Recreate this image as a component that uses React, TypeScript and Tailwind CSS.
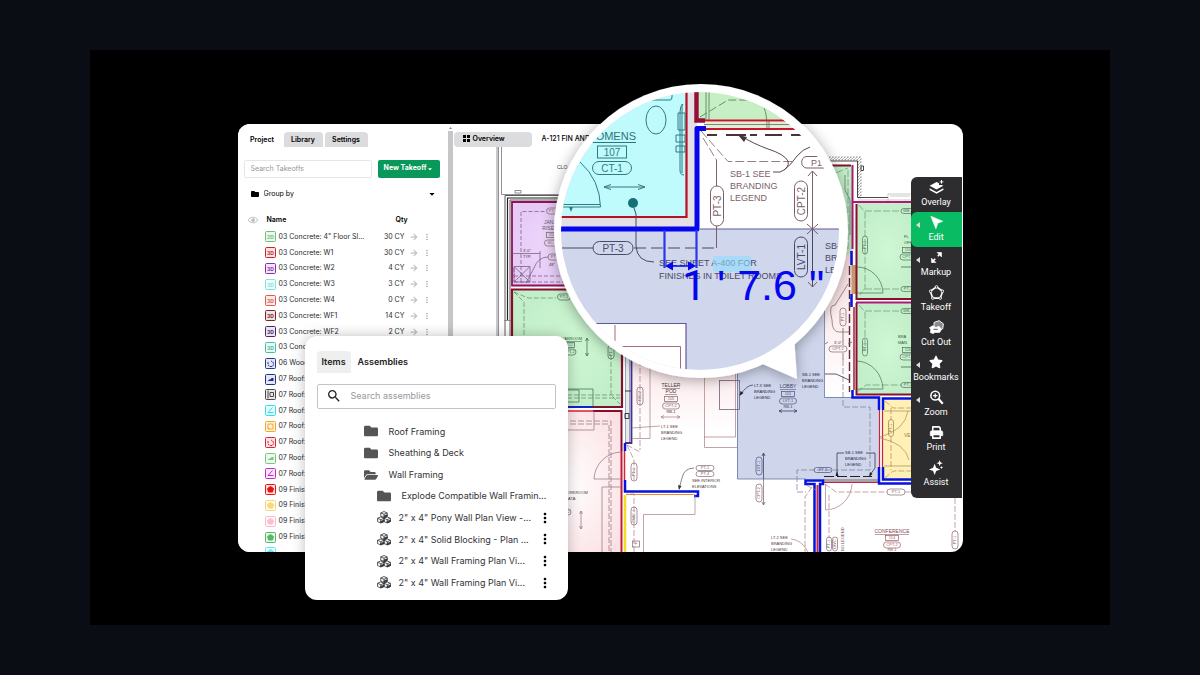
import { useState } from "react";
import type { ReactNode } from "react";
import { FaArrowRight, FaCaretDown, FaFolder, FaFolderOpen, FaRegEye, FaStar } from "react-icons/fa";
import { MdMoreVert, MdSearch } from "react-icons/md";

type Shape = "2D" | "3D" | "count" | "area" | "frame" | "angle" | "square" | "solid";

type Takeoff = { name: string; qty?: string; color: string; shape: Shape };

const takeoffs: Takeoff[] = [
  { name: '03 Concrete: 4" Floor Sl...', qty: "30 CY", color: "#6cc077", shape: "2D" },
  { name: "03 Concrete: W1", qty: "30 CY", color: "#c8232c", shape: "3D" },
  { name: "03 Concrete: W2", qty: "4 CY", color: "#8a2bb5", shape: "3D" },
  { name: "03 Concrete: W3", qty: "3 CY", color: "#7fe5dc", shape: "3D" },
  { name: "03 Concrete: W4", qty: "0 CY", color: "#df5a4a", shape: "3D" },
  { name: "03 Concrete: WF1", qty: "14 CY", color: "#7d2028", shape: "3D" },
  { name: "03 Concrete: WF2", qty: "2 CY", color: "#4b2570", shape: "3D" },
  { name: "03 Concrete", color: "#46bfa8", shape: "3D" },
  { name: "06 Wood", color: "#253a8c", shape: "count" },
  { name: "07 Roof:", color: "#1d3090", shape: "area" },
  { name: "07 Roof:", color: "#4a4a4a", shape: "frame" },
  { name: "07 Roof:", color: "#2fe0ec", shape: "angle" },
  { name: "07 Roof:", color: "#f5a623", shape: "square" },
  { name: "07 Roof:", color: "#dc2434", shape: "count" },
  { name: "07 Roof:", color: "#78c77e", shape: "area" },
  { name: "07 Roof:", color: "#bf2bc4", shape: "angle" },
  { name: "09 Finish", color: "#ee1111", shape: "solid" },
  { name: "09 Finish", color: "#f8d878", shape: "solid" },
  { name: "09 Finish", color: "#f9bfcd", shape: "solid" },
  { name: "09 Finish", color: "#55b867", shape: "solid" },
  { name: "", color: "#6fe3ef", shape: "solid" },
];

function TakeoffIcon({ shape, color }: { shape: Shape; color: string }) {
  return (
    <svg viewBox="0 0 22 22" className="size-[11px]" fill="none" stroke={color} strokeWidth="2">
      <rect x="1" y="1" width="20" height="20" rx="2" fill={color} fillOpacity="0.12" />
      {(shape === "2D" || shape === "3D") && (
        <text x="11" y="15" textAnchor="middle" fontSize="10" fontWeight="700" fill={color} stroke="none" fontFamily="Inter, sans-serif">
          {shape}
        </text>
      )}
      {shape === "count" && <path d="M6 8v6l4 3h5l2-4-1-5-4-2" strokeDasharray="4 1.5" />}
      {shape === "area" && <path d="M5 14l4-3 3-1 1-2h4v6z" fill={color} stroke="none" />}
      {shape === "frame" && <path d="M6 3v16M10 7h7v8h-7z" />}
      {shape === "angle" && <path d="M15 5L6 15h11" />}
      {shape === "square" && <path d="M6 6h10v10H6zM6 13l3 3" />}
      {shape === "solid" && <path d="M11 5l6 4-2 7H7L5 9z" fill={color} strokeLinejoin="round" />}
    </svg>
  );
}

function Sidebar() {
  const [tab, setTab] = useState("Project");

  return (
    <aside className="flex w-[210px] shrink-0 flex-col overflow-hidden bg-white">
      <nav className="flex gap-[2px] pt-2 pl-[5px]">
        {["Project", "Library", "Settings"].map((name) => (
          <button
            key={name}
            type="button"
            onClick={() => setTab(name)}
            className={`h-[15px] rounded-t-sm text-[7px] leading-[15px] font-semibold ${
              name === "Settings" ? "w-[43px]" : "w-[39px]"
            } ${tab === name ? "bg-white" : "bg-[#dcdcde]"}`}
          >
            {name}
          </button>
        ))}
      </nav>

      <div className="flex gap-[6px] px-[6px] pt-[13px]">
        <input
          aria-label="Search Takeoffs"
          placeholder="Search Takeoffs"
          className="h-[18px] w-[128px] rounded-xs border border-[#e6e6e8] px-[6px] text-[7px] outline-none placeholder:text-[#97979b]"
        />
        <button
          type="button"
          className="flex h-[18px] w-[62px] items-center justify-center gap-px rounded-xs bg-[#08985a] text-[7px] font-bold text-white"
        >
          New Takeoff <FaCaretDown className="size-[6px]" />
        </button>
      </div>

      <label className="mt-[11px] flex h-4 items-center gap-[5px] pr-[12px] pl-[13px] text-[7px]">
        <FaFolder className="size-2" />
        <select aria-label="Group by" className="flex-1 appearance-none bg-transparent outline-none">
          <option>Group by</option>
          <option>Trade</option>
        </select>
        <FaCaretDown className="size-2" />
      </label>

      <table className="mt-[12px] h-[350px] w-[203px] shrink-0 table-fixed border-collapse text-[7px] leading-[8px] text-[#2a2a2e]">
        <colgroup>
          <col className="w-[27px]" />
          <col className="w-[14px]" />
          <col />
          <col className="w-[36px]" />
          <col className="w-[18px]" />
          <col className="w-[18px]" />
        </colgroup>
        <thead>
          <tr className="h-[18px] text-black">
            <th className="pl-[10px]">
              <FaRegEye className="size-[10px] text-[#bdbdc0]" aria-label="Visible" />
            </th>
            <th colSpan={2} className="pl-[2px] text-left font-semibold">
              Name
            </th>
            <th colSpan={3} className="pl-[27px] text-left font-semibold">
              Qty
            </th>
          </tr>
        </thead>
        <tbody>
          {takeoffs.map((item, i) => (
            <tr key={i}>
              <td />
              <td>
                <TakeoffIcon shape={item.shape} color={item.color} />
              </td>
              <td className="whitespace-nowrap">{item.name}</td>
              <td className="text-right whitespace-nowrap">{item.qty}</td>
              <td className="pl-[6px]">
                <FaArrowRight className="size-2 text-[#c2c2c5]" />
              </td>
              <td>
                <button type="button" aria-label={`${item.name} menu`} className="block">
                  <MdMoreVert className="size-[10px] text-[#a0a0a4]" />
                </button>
              </td>
            </tr>
          ))}
        </tbody>
      </table>
    </aside>
  );
}

type TagProps = {
  x: number;
  y: number;
  w: number;
  h: number;
  size: number;
  children: string;
  vertical?: boolean;
  boxed?: boolean;
  color?: string;
};

// Finish tag: pill (or box) centred on x,y
function Tag({ x, y, w, h, size, children, vertical, boxed, color = "#85656d" }: TagProps) {
  return (
    <g transform={`translate(${x} ${y})${vertical ? " rotate(-90)" : ""}`}>
      <rect
        x={-w / 2}
        y={-h / 2}
        width={w}
        height={h}
        rx={boxed ? 0 : h / 2}
        fill="none"
        stroke={color}
        strokeWidth={size > 6 ? 1 : 0.7}
      />
      <text y={size * 0.36} fontSize={size} textAnchor="middle" fill={color}>
        {children}
      </text>
    </g>
  );
}

function Note({
  x,
  y,
  lines,
  size = 4,
  step = 6,
  color = "#4d363e",
  anchor = "start",
}: {
  x: number;
  y: number;
  lines: string[];
  size?: number;
  step?: number;
  color?: string;
  anchor?: "start" | "middle";
}) {
  return (
    <text fontSize={size} fill={color} textAnchor={anchor}>
      {lines.map((line, i) => (
        <tspan key={i} x={x} y={y + i * step}>
          {line}
        </tspan>
      ))}
    </text>
  );
}

function FloorPlan() {
  return (
    <svg
      viewBox="453 147 510 405"
      preserveAspectRatio="xMidYMid slice"
      className="min-h-0 w-full flex-1"
      fontFamily="'Liberation Sans', Arial, sans-serif"
      fill="none"
    >
      <defs>
        <radialGradient id="purple">
          <stop offset="0" stopColor="#f0dcfd" />
          <stop offset="1" stopColor="#e6cbf7" />
        </radialGradient>
        <radialGradient id="green">
          <stop offset="0" stopColor="#cff7d3" />
          <stop offset="1" stopColor="#c2efc9" />
        </radialGradient>
        <radialGradient id="pink" r="0.7">
          <stop offset="0" stopColor="#ffffff" />
          <stop offset="1" stopColor="#fbdde1" />
        </radialGradient>
        <linearGradient id="pinkDown" x2="0" y2="1">
          <stop offset="0" stopColor="#fbdfe2" />
          <stop offset="1" stopColor="#ffffff" />
        </linearGradient>
        <pattern id="hatch" width="3" height="3" patternUnits="userSpaceOnUse">
          <path d="M0 3L3 0" stroke="#888" strokeWidth="0.6" />
        </pattern>
      </defs>

      {/* room fills */}
      <rect x="512" y="202" width="110" height="84" fill="url(#purple)" />
      <rect x="512" y="290" width="110" height="117" fill="url(#green)" />
      <rect x="512" y="411" width="110" height="145" fill="url(#pink)" />
      <rect x="632" y="340" width="105" height="90" fill="url(#pinkDown)" />
      <path d="M737 330L824 270V397H880V479H737z" fill="#cfd6ec" />
      <rect x="825" y="250" width="28" height="147" fill="url(#pinkDown)" />
      <rect x="820" y="166" width="32" height="88" fill="url(#green)" />
      <rect x="857" y="203" width="60" height="96" fill="url(#green)" />
      <rect x="857" y="303" width="60" height="91" fill="url(#green)" />
      <rect x="883" y="400" width="40" height="80" fill="#fff0b5" />

      {/* outer shell */}
      <g stroke="#77747a" strokeWidth="0.8">
        <path d="M497 147V560M498.5 147V560M501.5 147V194.5H570M515 193V190.500H521V193z" />
        <path d="M505 560V195.500H570M510 560V200H570" stroke="#333" />
        <path d="M507.500 320V198H570" stroke="#222" strokeWidth="1.200" />
        <path d="M504 320.500H511" />
      </g>
      <path d="M820 157h41v41h-3v-38h-38z" fill="url(#hatch)" stroke="#666" strokeWidth="0.5" strokeDasharray="2 1" />
      <path d="M820 161H857.500V197.500H888M861 166h2.500v4.500H861z" stroke="#333" strokeWidth="0.9" />
      <path d="M858 200H911M888 194V201M888 194H911M890 196h20M946 190v8" stroke="#aaa" strokeWidth="0.6" />

      {/* purple room */}
      <path d="M600 202H512V285.500H600" stroke="#90105a" strokeWidth="1.800" />
      <g stroke="#6d5877" strokeWidth="0.7">
        <path d="M521 282V211.500H545M514 276H600M514 282H600M514 268V282" strokeDasharray="4 2" />
        <path d="M514 266.500H530V282H514zL530 282M530 266.500L514 282M511 253.500H540M540 251V268M548 257Q538 257 534 268L526 283" />
      </g>
      <Tag x={553} y={211} w={13} h={6} size={4}>PT-1</Tag>
      <Note x={550} y={224} lines={["JAN./", "RISER"]} size={5} color="#6d5877" anchor="middle" />
      <Tag x={552} y={235} w={11} h={5} size={4} boxed>110</Tag>
      <Tag x={552} y={243} w={15} h={6} size={4}>SC-1</Tag>
      <Tag x={555} y={257} w={14} h={6} size={4}>PT-2</Tag>
      <Note x={523} y={252} lines={["3'-0\"", "TYP."]} />
      <Note x={549} y={266} lines={['48"']} />

      {/* cloakroom */}
      <path d="M622 350V407H593M512 430V289.500H600" stroke="#850f2a" strokeWidth="2.200" />
      <path d="M568 407H593" stroke="#1521c8" strokeWidth="2" />
      <g stroke="#5e8a66" strokeWidth="0.7">
        <path d="M514 292L524 302V400M514 292L528 298H556M611 355V395L620 404M560 395H620M560 398H620" strokeDasharray="5 2" />
        <path d="M587 338V356M585.500 341L587 338L588.500 341M585.500 353L587 356L588.500 353M568 389H593V406M568 390H579V402H568" stroke="#3f6647" />
      </g>
      <Tag x={564} y={297} w={13} h={6} size={4} color="#4d6d56">PT-1</Tag>
      <Tag x={611} y={352} w={14} h={6} size={4} vertical color="#4d6d56">PT-1</Tag>
      <Note x={569} y={340} lines={["CLOAKROOM"]} anchor="middle" size={4} color="#345a3c" />
      <path d="M557 341.500H582" stroke="#345a3c" strokeWidth="0.5" />
      <Tag x={570} y={345} w={9} h={5} size={4} boxed color="#4d6d56">112</Tag>
      <Tag x={569} y={352} w={14} h={6} size={4} color="#4d6d56">CPT-2</Tag>
      <Note x={557} y={169} lines={["CLO"]} size={5} color="#444" />

      {/* workroom */}
      <path d="M568 411H593" stroke="#d82031" strokeWidth="1.500" />
      <path d="M593 411H621.500V451" stroke="#850f2a" strokeWidth="2" />
      <path d="M621.500 451V560" stroke="#c41c3a" strokeWidth="2" />
      <g stroke="#947078" strokeWidth="0.7">
        <path d="M570 421H611V552M570 424H609V552" strokeDasharray="6 2" />
        <path d="M594 411V430H568M594 479A28 28 0 0 1 621 452M594 479H621M602 552V487H621" />
        <path d="M581 511V529M579.500 514L581 511L582.500 514M579.500 526L581 529L582.500 526" />
      </g>
      <Note x={563} y={494} lines={["WORKROOM", "/ DATA"]} />
      <Tag x={564} y={512} w={14} h={6} size={4}>CPT-2</Tag>

      {/* divider wall */}
      <rect x="625" y="350" width="7" height="93" fill="#e6ebf3" />
      <path d="M625.500 350V443M629.500 350V443" stroke="#7c8496" strokeWidth="0.7" />
      <path d="M625 391H631M625 413.500H629V418.500H625z" stroke="#222" strokeWidth="0.9" />
      <path d="M631.500 350V443H625" stroke="#473090" strokeWidth="1.800" />
      <path d="M624.500 451V480" stroke="#d2253a" strokeWidth="1.500" />
      <path d="M625 443V451M625 480V491.500H698V496H694" stroke="#0512e0" strokeWidth="2.500" />
      <path d="M626 494.500H694" stroke="#ef8b2c" strokeWidth="1.200" />
      <path d="M625 495V560" stroke="#f1dc28" strokeWidth="2.500" />

      {/* teller pod */}
      <g stroke="#a87c83" strokeWidth="0.7">
        <path d="M650 360V438.500H632M704.500 365V447.500H737M735.500 365V437H704M695 495V514.500H643.500V552" />
        <path d="M640 360V450M634 560V494L627 494M627 445L640 452M627 445L634 460V480" strokeDasharray="6 2" />
        <path d="M661 417H680M664 415.500L661 417L664 418.500M677 415.500L680 417L677 418.500M632 428L660 426" />
        <path d="M694 468Q684 468 682 478L679 489" stroke="#555" />
      </g>
      <path d="M678 485L679 490L681.500 486z" fill="#333" />
      <rect x="719.500" y="380.500" width="20" height="29" stroke="#6d607c" strokeWidth="0.8" />
      <Note x={671} y={387} lines={["TELLER", "POD"]} size={5} anchor="middle" />
      <path d="M662 388.500H680M665 394.500H677" stroke="#5f4850" strokeWidth="0.5" />
      <Tag x={671} y={399} w={13} h={5} size={4} boxed>105</Tag>
      <Tag x={671} y={406} w={17} h={6} size={4}>CPT-2</Tag>
      <Note x={671} y={413} lines={["RB-1"]} anchor="middle" />
      <Note x={661} y={428} lines={["LT-1 SEE", "BRANDING", "LEGEND"]} />
      <Tag x={640} y={396} w={18} h={6} size={4} vertical>WC-2</Tag>
      <Tag x={634} y={472} w={18} h={6} size={4} vertical>PT-1</Tag>
      <Tag x={634} y={516} w={18} h={6} size={4} vertical>DWC-1</Tag>
      <Tag x={636} y={544} w={7} h={6} size={4} boxed>F</Tag>
      <Tag x={705} y={468} w={18} h={5} size={4}>PT-1</Tag>
      <Tag x={705} y={474} w={18} h={5} size={4}>PT-4</Tag>
      <Note x={692} y={482} lines={["SEE INTERIOR", "ELEVATIONS"]} />

      {/* lobby */}
      <path d="M737.500 365V479H806M824.500 290V397.500H852" stroke="#68739e" strokeWidth="0.8" />
      <path d="M843 360V407H870V470H797V492H806" stroke="#77799a" strokeWidth="0.7" strokeDasharray="6 2" />
      <Note x={788} y={388} lines={["LOBBY"]} size={5} anchor="middle" color="#3d4366" />
      <path d="M780 389.500H796" stroke="#3d4366" strokeWidth="0.5" />
      <Tag x={788} y={394} w={13} h={5} size={4} boxed color="#4a5078">101</Tag>
      <Tag x={788} y={401} w={17} h={6} size={4} color="#4a5078">LVT-1</Tag>
      <Note x={788} y={408} lines={["RB-1"]} anchor="middle" color="#3d4366" />
      <path
        d="M779 411H797M782 409.500L779 411L782 412.500M794 409.500L797 411L794 412.500M753 385Q747 385 740 395M763.500 453V479M762 456L763.500 453L765 456"
        stroke="#3d4366"
        strokeWidth="0.8"
      />
      <path d="M739.500 396L740.500 391L743.500 393z" fill="#222" />
      <path d="M763.500 479V505M762 502L763.500 505L765 502" stroke="#8f6b75" strokeWidth="0.8" />
      <Note x={754} y={387} lines={["LT-X SEE", "BRANDING", "LEGEND"]} color="#24273f" />
      <Note x={802} y={376} lines={["SB-1 SEE", "BRANDING", "LEGEND"]} color="#24273f" />
      <Note x={845} y={454} lines={["SB-1 SEE", "BRANDING", "LEGEND"]} color="#24273f" />
      <path d="M825 374H836L849 380M844 453H837V474M866 453H875V468L870 475" stroke="#33374f" strokeWidth="0.8" />
      <path d="M835.500 476L837 471L838.500 476zM869 477L870 472L872.500 474z" fill="#222" />
      <path d="M824 476.500H872" stroke="#222" strokeWidth="1.200" strokeDasharray="10 3" />
      <Tag x={823} y={470} w={18} h={5} size={4} color="#4a5078">PT-1</Tag>
      <Tag x={759} y={466} w={18} h={6} size={4} vertical color="#4a5078">LVT-1</Tag>
      <Tag x={759} y={493} w={18} h={6} size={4} vertical>CPT-2</Tag>

      {/* lobby walls */}
      <path d="M823 480.500H879" stroke="#a9a0aa" strokeWidth="3" />
      <path d="M823 482.500H879" stroke="#c5243a" strokeWidth="1.200" />
      <path d="M814.500 555V484H805.500V480.500H823V484H820V555" stroke="#0512e0" strokeWidth="2.500" />
      <path d="M817.500 485V552" stroke="#c5243a" strokeWidth="2" />
      <path d="M879.500 410V467M882.500 410V467" stroke="#c5243a" strokeWidth="1.200" />
      <path
        d="M852.500 390V397.500H879V410M915 398.500H883V410M879 467V483.500H915M883 467V479.500H915"
        stroke="#0512e0"
        strokeWidth="2.500"
      />

      {/* glazed strip beside the offices */}
      <path d="M849.500 266V392" stroke="#55303a" strokeWidth="1.400" strokeDasharray="9 3" />
      <path d="M854 307V390" stroke="#9b1f3c" strokeWidth="1.500" />
      <path d="M851.500 251V265M851.500 294V307" stroke="#0512e0" strokeWidth="2.500" />
      <path d="M854 265V294" stroke="#c79b6d" strokeWidth="5" />
      <path d="M848 284L835 305Q828 305 832 320Q832 332 839 332H849" stroke="#776065" strokeWidth="0.7" />
      <Tag x={843} y={317} w={18} h={6} size={4} vertical>PT-1</Tag>
      <Note x={838} y={344} lines={["3'-0\""]} anchor="middle" />
      <Tag x={838} y={349} w={18} h={6} size={4}>CPT-2</Tag>
      <path d="M825 344L828 342M848 344L852 342M843 328V345M843 353V360" stroke="#776065" strokeWidth="0.8" />

      {/* offices */}
      <path d="M820 165.500H851" stroke="#850f2a" strokeWidth="2" />
      <path d="M852.500 165V249M853 202H915M856 302.500H915" stroke="#b01877" strokeWidth="2" />
      <path d="M856.500 204V299H915M856.500 303V394.500H915" stroke="#8b0f2d" strokeWidth="2" />
      <g stroke="#6d957a" strokeWidth="0.7">
        <path
          d="M859 205L865 212V288L860 295M865 211H901M865 289H901M859 305L865 312V350M865 311H901M857 392L866 385H901M848 170V250M828 176L848 168"
          strokeDasharray="7 2"
        />
        <path d="M857 267A26 27 0 0 1 883 293H857M857 361A27 29 0 0 1 883 389H857M845 175V190L850 200V235" stroke="#4f6a57" />
      </g>
      {[211, 311].map((y) => (
        <g key={y}>
          <Tag x={908} y={y} w={14} h={5} size={4} color="#55705e">WB-1</Tag>
          <Note x={y === 211 ? 904 : 898} y={y + 27} lines={y === 211 ? ["FL", "OFF"] : ["BRA", "MAN"]} color="#345a3c" />
          <Tag x={908} y={y + 39} w={11} h={5} size={4} boxed color="#55705e">116</Tag>
          <Tag x={908} y={y + 46} w={16} h={6} size={4} color="#55705e">CPT-2</Tag>
          <path d={`M901 ${y + 56}H915`} stroke="#345a3c" strokeWidth="0.7" />
        </g>
      ))}
      <Tag x={865} y={245} w={18} h={5} size={4} vertical color="#55705e">PT-1</Tag>
      <Tag x={865} y={347} w={18} h={5} size={4} vertical color="#55705e">PT-1</Tag>
      <Tag x={908} y={289} w={14} h={5} size={4} color="#55705e">PT-1</Tag>
      <Tag x={908} y={385} w={14} h={5} size={4} color="#55705e">PT-1</Tag>

      {/* vestibule */}
      <g stroke="#b08a58" strokeWidth="0.7">
        <path d="M884 411H911M884 466H911M880 437Q905 430 908 411M880 438Q905 443 909 460" />
        <path d="M885 401L893 408H911M885 478L893 471H911M891 408V420M891 437V470" strokeDasharray="6 2" />
      </g>
      <Tag x={891} y={428} w={17} h={5} size={4} vertical color="#a07b4c">PT-1</Tag>
      <Note x={904} y={437} lines={["VE"]} size={5} color="#a07b4c" />

      {/* conference */}
      <g stroke="#a87c83" strokeWidth="0.7">
        <path d="M825 484L836 492H887M905 492H955V531M806 485L816 490M812 487L805 497V552M829 495V538" strokeDasharray="6 2" />
        <path d="M825.500 484V510A27 27 0 0 0 852 484M791 539Q802 540 808 552" />
      </g>
      <Tag x={896} y={492} w={18} h={6} size={4}>PT-1</Tag>
      <Tag x={955} y={540} w={18} h={6} size={4} vertical>PT-1</Tag>
      <Note x={892} y={533} lines={["CONFERENCE"]} size={5} anchor="middle" color="#8a4653" />
      <path d="M875 534.500H909" stroke="#9a5964" strokeWidth="0.6" />
      <Tag x={892} y={538} w={13} h={5} size={4} boxed color="#9a5964">114</Tag>
      <Tag x={892} y={545} w={17} h={6} size={4} color="#9a5964">CPT-2</Tag>
      <Note x={892} y={551} lines={["RB-1"]} anchor="middle" color="#9a5964" />
      <Note x={771} y={539} lines={["LT-2 SEE", "BRANDING", "LEGEND"]} />
      <Tag x={829} y={544} w={14} h={5} size={4} vertical>PT-1</Tag>
      <Tag x={835} y={544} w={14} h={5} size={4} vertical>DWC</Tag>
      <text transform="translate(844 551) rotate(-90)" fontSize="4" fill="#5f4850">
        NG LEGEND
      </text>
    </svg>
  );
}

function Magnifier() {
  const ink = "#7b5f69";
  const slate = "#484a63";

  return (
    <svg
      viewBox="540 70 330 330"
      className="pointer-events-none absolute -top-[54px] left-[302px] w-[330px]"
      fontFamily="'Liberation Sans', Arial, sans-serif"
      fill="none"
    >
      <defs>
        <clipPath id="lens">
          <circle cx="700" cy="231" r="139" />
        </clipPath>
        <filter id="lensShadow" x="-20%" y="-20%" width="140%" height="140%">
          <feDropShadow dx="0" dy="2" stdDeviation="7" floodOpacity="0.35" />
        </filter>
      </defs>
      <g fill="#fff" filter="url(#lensShadow)">
        <circle cx="701" cy="231" r="147" />
        <path d="M758 362L797 379L794 335z" />
      </g>

      <g clipPath="url(#lens)">
        <rect x="560" y="90" width="280" height="280" fill="#fff" />
        <rect x="560" y="90" width="137" height="140" fill="#e3dfe4" />
        <rect x="560" y="90" width="125" height="126" fill="#bffafc" />
        <rect x="699" y="90" width="141" height="30" fill="#c7efc6" />
        <rect x="704" y="122" width="136" height="6" fill="#e4ecd9" />
        <rect x="560" y="229" width="280" height="142" fill="#d0d6ec" />
        <path d="M560 323.500H686V372H560z" fill="#fff" stroke="#65569a" strokeWidth="1.200" />
        <path d="M615 325V341M622 346.500H680.500V372" stroke="#a66b7f" />

        {/* womens room */}
        <path d="M686.500 90V217H560" stroke="#b51224" strokeWidth="2.200" />
        <text x="636" y="140" fontSize="11" textAnchor="end" fill="#2d747d">
          WOMENS
        </text>
        <path d="M589 142.500H636" stroke="#2d747d" />
        <Tag x={612} y={152} w={29} h={12} size={10} boxed color="#2f7a83">107</Tag>
        <Tag x={612} y={168} w={39} h={13} size={10} color="#2f7a83">CT-1</Tag>
        <g stroke="#2f7a83">
          <ellipse cx="656" cy="120" rx="10" ry="14" />
          <path d="M604 187H645M611 184.500L604 187L611 189.500M638 184.500L645 187L638 189.500" />
          <path d="M580 162Q600 180 600.500 207H560M560 204.500H600M650 100H670Q672 100 672 97V90" />
          <path d="M683 104Q680 106 680 112V170Q680 175 684 175M678 113H685V130H678zM676 135H685V142H676zM676 146H685V152H676zM682 104V173" />
        </g>
        <path d="M569 207L571 212L573 207z" fill="#2f7a83" />
        <circle cx="633" cy="203" r="5" fill="#167078" />
        <path d="M634 208L636 214V246Q637 262 654 262" stroke={slate} />

        {/* room to the right */}
        <g stroke="#5f8460" strokeWidth="0.9">
          <path d="M706 90V120M709 90V120M704 124.500H800M764 108Q767 114 767 128M769 120V129" />
          <path d="M700 117L728 100H765" strokeDasharray="8 3" />
        </g>
        <path d="M704 120.500H800M706 129H800" stroke="#c61826" strokeWidth="2" />
        <path d="M696.500 90V120.500H705" stroke="#930f38" strokeWidth="4.500" />
        <path d="M707 135H717M726 135H746M750 135H757M765 135H782M791 135H802" stroke="#4a3138" strokeWidth="1.800" />
        <g stroke={ink}>
          <path d="M701 131L728 161.500H795M703 138L716.500 160" strokeDasharray="9 3" strokeWidth="0.8" />
          <path d="M716.500 160V186M716.500 226V248M812.500 171V287" />
          <path d="M808 176L812.500 171L817 176M807 224L812.500 229L818 224M807 234L812.500 229L818 234M808 282L812.500 287L817 282" />
          <path d="M773 172H780Q790 168 788 161Q784 154 768 149Q752 143 743 137M784 170Q791 165 797 156Q803 149 810 147" stroke="#5c464e" />
          <path d="M824 156.500H806A6 6 0 0 0 806 168H824" />
        </g>
        <path d="M738 135L747 137L744 142z" fill="#4a3138" />
        <Note x={730} y={177} lines={["SB-1 SEE", "BRANDING", "LEGEND"]} size={9} step={12} color={ink} />
        <Note x={811} y={166} lines={["P1"]} size={9} color={ink} />
        <Tag x={717} y={206} w={40} h={13} size={10} vertical color={ink}>PT-3</Tag>
        <Tag x={801} y={201} w={40} h={13} size={10} vertical color={ink}>CPT-2</Tag>

        {/* lobby side */}
        <path d="M700 229H840" stroke="#5b5f92" strokeWidth="1.200" />
        <path d="M560 248H593M812.500 230V287" stroke={slate} />
        <path d="M634 248H716" stroke={slate} strokeDasharray="12 5" />
        <Tag x={613} y={248} w={40} h={13} size={10} color={slate}>PT-3</Tag>
        <Tag x={801} y={257} w={40} h={13} size={10} vertical color={slate}>LVT-1</Tag>
        <Note x={825} y={249} lines={["SB-", "BR", "LE"]} size={9} step={12} color={slate} />
        <Note x={659} y={266} lines={["SEE SHEET A-400 FOR", "FINISHES IN TOILET ROOMS"]} size={9} step={13} color={slate} />
        <rect x="713" y="256" width="38" height="16" rx="2" fill="#8fdcff" fillOpacity="0.6" />

        <path d="M706 128.500H697V229H560" stroke="#0505ee" strokeWidth="5" strokeLinejoin="round" />
        <path d="M664.500 230V268M696.500 230V268" stroke="#2c35ee" strokeWidth="2.200" />
        <path d="M668 266H694" stroke="#0505ee" strokeWidth="1.600" />
        <path d="M665 266L673 261.500V270.500zM696 266L688 261.500V270.500z" fill="#0505ee" />
        <text y="300" fontSize="43" fill="#0505ee">
          <tspan x="682" fontFamily="Roboto, sans-serif">1</tspan>
          <tspan x="717">' 7.6 "</tspan>
        </text>
      </g>
    </svg>
  );
}

function ToolIcon({ children }: { children: ReactNode }) {
  return (
    <svg viewBox="0 0 24 24" className="size-[15px]" fill="none" stroke="#fff" strokeWidth="2" strokeLinejoin="round">
      {children}
    </svg>
  );
}

const tools: { label: string; menu?: boolean; icon: ReactNode }[] = [
  {
    label: "Overlay",
    icon: (
      <ToolIcon>
        <path d="M1 9l11-6 4 2v3h4l3 1-11 6z" fill="#fff" stroke="none" />
        <path d="M1 13l11 6 11-6v3l-11 6L1 16z" fill="#fff" stroke="none" />
        <path d="M20 0v6M17 3h6" strokeWidth="1.500" />
      </ToolIcon>
    ),
  },
  {
    label: "Edit",
    menu: true,
    icon: (
      <ToolIcon>
        <path d="M3 2l19 8-8 3-3 9z" fill="#fff" strokeWidth="1" />
      </ToolIcon>
    ),
  },
  {
    label: "Markup",
    menu: true,
    icon: (
      <ToolIcon>
        <path d="M14 10l5-5M10 14l-5 5" strokeWidth="2.500" />
        <path d="M13 4h7v7zM4 13v7h7z" fill="#fff" strokeWidth="1" />
      </ToolIcon>
    ),
  },
  {
    label: "Takeoff",
    icon: (
      <ToolIcon>
        <path d="M12 3l10 7-4 11H6L2 10z" strokeWidth="2.500" />
        <g fill="#2d2d2f" strokeWidth="1.500">
          <circle cx="12" cy="3" r="2" />
          <circle cx="21.500" cy="10" r="2" />
          <circle cx="18" cy="21" r="2" />
          <circle cx="6" cy="21" r="2" />
          <circle cx="2.500" cy="10" r="2" />
        </g>
      </ToolIcon>
    ),
  },
  {
    label: "Cut Out",
    icon: (
      <ToolIcon>
        <path d="M8 4l8-3 7 5-1 8-7 3-7-5z" fill="#8b8b8d" strokeWidth="1.500" />
        <path d="M1 12l5-3 5 3 5-2 4 5-3 5H9l-2 2-5-2 1-4z" fill="#fff" strokeWidth="1" />
        <path d="M7 15h7" stroke="#777" />
      </ToolIcon>
    ),
  },
  { label: "Bookmarks", menu: true, icon: <FaStar className="size-[14px]" /> },
  {
    label: "Zoom",
    menu: true,
    icon: (
      <ToolIcon>
        <circle cx="10" cy="9" r="7" strokeWidth="2.500" />
        <path d="M15 14l7 8" strokeWidth="3.500" />
        <path d="M10 5.500v7M6.500 9h7" />
      </ToolIcon>
    ),
  },
  {
    label: "Print",
    icon: (
      <ToolIcon>
        <path d="M6 9V3h10l2 2v4" strokeWidth="2.500" />
        <path d="M2 17v-5q0-3 3-3h14q3 0 3 3v5h-4v-3H6v3z" fill="#fff" strokeWidth="1" />
        <path d="M6 15h12v6H6z" fill="#2d2d2f" strokeWidth="2.500" />
      </ToolIcon>
    ),
  },
  {
    label: "Assist",
    icon: (
      <ToolIcon>
        <path
          d="M9 6l2.500 6.500L18 15l-6.500 2.500L9 24l-2.500-6.500L0 15l6.500-2.500zM17 0l1.300 3.700L22 5l-3.700 1.300L17 10l-1.300-3.700L12 5l3.700-1.300zM20 9.500l.8 1.700 1.700.8-1.700.8-.8 1.700-.8-1.700-1.700-.8 1.700-.8z"
          fill="#fff"
          stroke="none"
        />
      </ToolIcon>
    ),
  },
];

function Toolbar() {
  const [active, setActive] = useState("Edit");

  return (
    <div className="absolute top-[53px] right-px w-[51px] overflow-hidden rounded-l-md bg-[#2d2d2f] pb-[6px] text-white">
      {tools.map((tool) => (
        <button
          key={tool.label}
          type="button"
          onClick={() => setActive(tool.label)}
          className={`relative flex h-[35px] w-full flex-col items-center pt-[2px] font-[Roboto,sans-serif] text-[9px] leading-[12px] ${
            active === tool.label ? "rounded-l-md bg-[#09bb63]" : ""
          }`}
        >
          {tool.menu && (
            <svg viewBox="0 0 4 6" className="absolute top-[10px] left-[5px] h-[6px] w-1" fill="#ddd">
              <path d="M4 0v6L0 3z" />
            </svg>
          )}
          <span className="flex h-[17px] items-center">{tool.icon}</span>
          {tool.label}
        </button>
      ))}
    </div>
  );
}

// Three stacked cubes
function CubesIcon() {
  return (
    <svg viewBox="0 0 26 24" className="h-[13px] w-[14px] shrink-0" fill="none" stroke="#333" strokeWidth="1.500" strokeLinejoin="round">
      <path d="M13 1l6 2.500v6L13 12 7 9.500v-6zM7 3.500L13 6l6-2.500M13 6v6" />
      <path d="M7 11l6 2.500v6L7 22l-6-2.500v-6zM1 13.500L7 16l6-2.500M7 16v6" />
      <path d="M19 11l6 2.500v6L19 22l-6-2.500v-6zM13 13.500l6 2.500 6-2.500M19 16v6" />
      <path d="M13 9l6-2v2.500L13 12zM7 19l6-2v2.500L7 22zM19 19l6-2v2.500L19 22z" fill="#444" />
    </svg>
  );
}

const folders = [
  { name: "Roof Framing" },
  { name: "Sheathing & Deck" },
  { name: "Wall Framing", open: true },
];

const assemblies = [
  '2" x 4" Pony Wall Plan View -...',
  '2" x 4" Solid Blocking - Plan ...',
  '2" x 4" Wall Framing Plan Vi...',
  '2" x 4" Wall Framing Plan Vi...',
];

function AssembliesPanel() {
  const [tab, setTab] = useState("Items");

  return (
    <section className="absolute top-[212px] left-[67px] w-[263px] rounded-xl bg-white px-3 pt-[15px] pb-[6px] text-[9px] text-[#333336] shadow-[0_0_14px_rgba(0,0,0,0.25)]">
      <div className="flex gap-[2px]">
        {["Items", "Assemblies"].map((name) => (
          <button
            key={name}
            type="button"
            onClick={() => setTab(name)}
            className={`h-[22px] rounded-t-sm px-[5px] font-semibold text-[#222] ${tab === name ? "bg-[#efeff0]" : ""}`}
          >
            {name}
          </button>
        ))}
      </div>
      <label className="mt-[11px] flex h-[25px] items-center gap-[9px] rounded-xs border border-[#c4c4c6] px-2">
        <MdSearch className="size-4 text-[#222]" />
        <input
          aria-label="Search assemblies"
          placeholder="Search assemblies"
          className="flex-1 outline-none placeholder:text-[#98989c]"
        />
      </label>

      <ul className="mt-3 grid h-[173px] grid-rows-8 whitespace-nowrap">
        {folders.map((folder) => (
          <li key={folder.name} className="flex items-center gap-[11px] pl-[47px]">
            {folder.open ? (
              <FaFolderOpen className="size-[14px] text-[#555]" />
            ) : (
              <FaFolder className="size-[14px] text-[#555]" />
            )}
            {folder.name}
          </li>
        ))}
        <li className="flex items-center gap-[11px] pl-[60px]">
          <FaFolder className="size-[14px] shrink-0 text-[#555]" /> Explode Compatible Wall Framin...
        </li>
        {assemblies.map((name, i) => (
          <li key={i} className="flex items-center gap-2 pl-[60px]">
            <CubesIcon />
            <span className="min-w-0 flex-1">{name}</span>
            <button type="button" aria-label="More" className="-ml-2 shrink-0 pr-[3px] text-black">
              <MdMoreVert className="size-4" />
            </button>
          </li>
        ))}
      </ul>
    </section>
  );
}

export default function App() {
  return (
    <div className="flex min-h-screen bg-[#0b0d14] px-[90px] py-[50px] font-[Inter,sans-serif]">
      <main className="flex flex-1 items-center justify-center bg-black">
        <div className="relative aspect-[725/428] w-full max-w-[725px]">
          <div className="flex h-full overflow-hidden rounded-xl bg-white">
            <Sidebar />
            <div className="flex w-[5px] shrink-0 flex-col">
              <svg viewBox="0 0 5 7" className="h-[7px] w-[5px]" fill="#888">
                <path d="M1 5h3L2.500 3z" />
              </svg>
              <div className="flex-1 bg-[#c6c6c8]" />
            </div>
            <div className="flex min-w-0 flex-1 flex-col">
              <nav className="flex h-[23px] items-end gap-[10px] pl-px text-[7px]">
                <button
                  type="button"
                  className="flex h-[15px] w-[78px] items-center gap-[2px] rounded-sm bg-[#dcdcde] pl-2 font-semibold"
                >
                  <svg viewBox="0 0 9 8" className="h-2 w-[9px]">
                    <path d="M1 0h3v3H1zM5 0h3v3H5zM1 4h3v3H1zM5 4h3v3H5z" />
                  </svg>
                  Overview
                </button>
                <button type="button" className="h-[15px] font-medium">
                  A-121 FIN AND
                </button>
              </nav>
              <FloorPlan />
            </div>
          </div>
          <Toolbar />
          <Magnifier />
          <AssembliesPanel />
        </div>
      </main>
    </div>
  );
}
